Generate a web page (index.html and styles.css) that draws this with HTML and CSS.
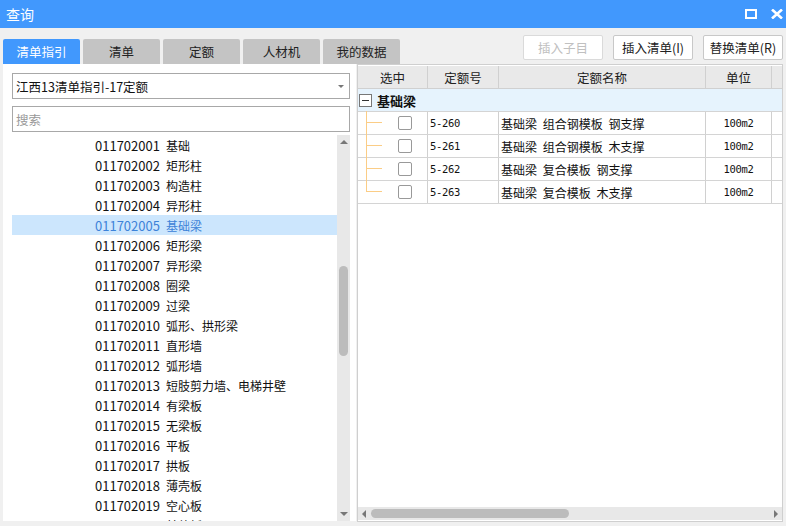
FILE: index.html
```html
<!DOCTYPE html>
<html lang="zh">
<head>
<meta charset="utf-8">
<link rel="stylesheet" href="styles.css">
</head>
<body>
<div class="win">
  <div class="titlebar">
    <span class="title">查询</span>
    <div class="wctrl">
      <svg width="12" height="10" viewBox="0 0 12 10"><rect x="1" y="1" width="10" height="8" fill="none" stroke="#fff" stroke-width="2"/></svg>
      <svg width="12" height="10" viewBox="0 0 12 10"><path d="M1 0.5 L11 9.5 M11 0.5 L1 9.5" stroke="#fff" stroke-width="2.6"/></svg>
    </div>
  </div>
  <div class="topbar">
    <div class="tabs">
      <div class="tab active">清单指引</div>
      <div class="tab">清单</div>
      <div class="tab">定额</div>
      <div class="tab">人材机</div>
      <div class="tab">我的数据</div>
    </div>
    <div class="btns">
      <div class="btn disabled">插入子目</div>
      <div class="btn">插入清单(I)</div>
      <div class="btn">替换清单(R)</div>
    </div>
  </div>
  <div class="main">
    <div class="pane-left">
      <div class="select">江西13清单指引-17定额<span class="caret"></span></div>
      <div class="search">搜索</div>
      <div class="listwrap">
        <div class="list">
          <div class="item"><span class="code">011702001</span><span>基础</span></div>
          <div class="item"><span class="code">011702002</span><span>矩形柱</span></div>
          <div class="item"><span class="code">011702003</span><span>构造柱</span></div>
          <div class="item"><span class="code">011702004</span><span>异形柱</span></div>
          <div class="item sel"><span class="code">011702005</span><span>基础梁</span></div>
          <div class="item"><span class="code">011702006</span><span>矩形梁</span></div>
          <div class="item"><span class="code">011702007</span><span>异形梁</span></div>
          <div class="item"><span class="code">011702008</span><span>圈梁</span></div>
          <div class="item"><span class="code">011702009</span><span>过梁</span></div>
          <div class="item"><span class="code">011702010</span><span>弧形、拱形梁</span></div>
          <div class="item"><span class="code">011702011</span><span>直形墙</span></div>
          <div class="item"><span class="code">011702012</span><span>弧形墙</span></div>
          <div class="item"><span class="code">011702013</span><span>短肢剪力墙、电梯井壁</span></div>
          <div class="item"><span class="code">011702014</span><span>有梁板</span></div>
          <div class="item"><span class="code">011702015</span><span>无梁板</span></div>
          <div class="item"><span class="code">011702016</span><span>平板</span></div>
          <div class="item"><span class="code">011702017</span><span>拱板</span></div>
          <div class="item"><span class="code">011702018</span><span>薄壳板</span></div>
          <div class="item"><span class="code">011702019</span><span>空心板</span></div>
          <div class="item"><span class="code">011702020</span><span>其他板</span></div>
        </div>
        <div class="vscroll">
          <span class="arr up"></span>
          <div class="vtrack"><div class="vthumb"></div></div>
          <span class="arr down"></span>
        </div>
      </div>
    </div>
    <div class="pane-right">
      <div class="grid">
        <div class="hrow">
          <div class="c c1">选中</div>
          <div class="c c2">定额号</div>
          <div class="c c3">定额名称</div>
          <div class="c c4">单位</div>
          <div class="c c5"></div>
        </div>
        <div class="group"><span class="minus"></span>基础梁</div>
        <div class="row">
          <div class="c c1"><span class="tree"></span><span class="chk"></span></div>
          <div class="c c2 mono">5-260</div>
          <div class="c c3">基础梁 组合钢模板 钢支撑</div>
          <div class="c c4 mono center">100m2</div>
          <div class="c c5"></div>
        </div>
        <div class="row">
          <div class="c c1"><span class="tree"></span><span class="chk"></span></div>
          <div class="c c2 mono">5-261</div>
          <div class="c c3">基础梁 组合钢模板 木支撑</div>
          <div class="c c4 mono center">100m2</div>
          <div class="c c5"></div>
        </div>
        <div class="row">
          <div class="c c1"><span class="tree"></span><span class="chk"></span></div>
          <div class="c c2 mono">5-262</div>
          <div class="c c3">基础梁 复合模板 钢支撑</div>
          <div class="c c4 mono center">100m2</div>
          <div class="c c5"></div>
        </div>
        <div class="row">
          <div class="c c1"><span class="tree end"></span><span class="chk"></span></div>
          <div class="c c2 mono">5-263</div>
          <div class="c c3">基础梁 复合模板 木支撑</div>
          <div class="c c4 mono center">100m2</div>
          <div class="c c5"></div>
        </div>
      </div>
      <div class="hscroll">
        <span class="harr harr-l"></span>
        <div class="hthumb"></div>
        <span class="harr harr-r"></span>
      </div>
    </div>
  </div>
</div>
</body>
</html>
```

FILE: styles.css
```css
* { box-sizing: border-box; }
html, body { margin: 0; padding: 0; }
body {
  width: 786px; height: 526px; overflow: hidden;
  background: #f0f0f0;
  font-family: "Noto Sans CJK SC", "Noto Sans", sans-serif;
  font-size: 12px; color: #222;
}
.win { display: flex; flex-direction: column; height: 526px; }
.titlebar {
  flex: 0 0 28px; background: #4198fd; color: #fff;
  display: flex; align-items: center; justify-content: space-between;
  padding: 0 3px 0 6px;
}
.title { font-size: 14px; line-height: 28px; }
.wctrl { display: flex; gap: 14px; align-items: center; }
.wctrl svg { display: block; }
.topbar {
  flex: 0 0 36px; display: flex; justify-content: space-between;
  padding: 0 3px 0 3px;
}
.tabs { display: flex; gap: 3px; align-items: flex-end; }
.tab {
  width: 77px; height: 25px; background: #c4c4c4; color: #222;
  border-radius: 2px 2px 0 0;
  display: flex; align-items: center; justify-content: center;
  font-size: 12.5px;
}
.tab.active { background: #4198fd; color: #fff; }
.btns { display: flex; gap: 10px; padding-top: 7px; }
.btn {
  width: 80px; height: 25px; background: #fff; border: 1px solid #c8c8c8;
  border-radius: 2px; display: flex; align-items: center; justify-content: center;
  font-size: 12.5px; color: #222;
}
.btn.disabled { color: #c0c0c0; border-color: #dadada; }
.main { flex: 1 1 0; min-height: 0; display: flex; padding: 0 3px 4px 3px; }
.pane-left {
  width: 353px; background: #fff; padding: 9px 6px 0 9px; margin-bottom: 1px;
  display: flex; flex-direction: column; min-height: 0;
}
.select, .search {
  flex: 0 0 26px; border: 1px solid #a8a8a8; background: #fff;
  display: flex; align-items: center; padding-left: 3px; position: relative;
}
.select { font-size: 12.5px; color: #111; }
.caret {
  position: absolute; right: 5px; top: 11px;
  border-left: 3px solid transparent; border-right: 3px solid transparent;
  border-top: 3px solid #777;
}
.search { margin-top: 7px; color: #999; font-size: 12.5px; }
.listwrap { flex: 1 1 0; min-height: 0; display: flex; margin-top: 3px; overflow: hidden; }
.list { flex: 1; overflow: hidden; }
.item {
  height: 20px; display: flex; align-items: center; padding-left: 83px;
  font-size: 12px; color: #111; white-space: nowrap;
}
.item .code { width: 71px; font-size: 13px; }
.item.sel { background: #cce6fd; color: #3d82d8; }
.vscroll {
  width: 13px; background: #e8e8e8; display: flex; flex-direction: column;
  align-items: center;
}
.arr { width: 0; height: 0; border-left: 4px solid transparent; border-right: 4px solid transparent; margin: 5px 0; }
.arr.up { border-bottom: 4px solid #777; }
.arr.down { border-top: 4px solid #777; }
.vtrack { flex: 1; width: 100%; padding: 117px 2px 0 2px; }
.vthumb { height: 90px; background: #bcbcbc; border-radius: 5px; }
.pane-right {
  flex: 1; margin-left: 1px; background: #fff; border: 1px solid #cfcfcf;
  display: flex; flex-direction: column; min-height: 0;
}
.grid { flex: 1; padding-top: 1px; }
.hrow, .row { display: flex; }
.hrow { height: 23px; background: #e9e9e9; border-bottom: 1px solid #d0d0d0; }
.c { border-right: 1px solid #d0d0d0; display: flex; align-items: center; }
.c1 { width: 70px; justify-content: center; position: relative; }
.c2 { width: 71px; }
.c3 { width: 207px; }
.c4 { width: 66px; }
.c5 { flex: 1; border-right: none; }
.hrow .c { justify-content: center; font-size: 12.5px; color: #222; }
.group {
  height: 23px; background: #e6f3fd; border-bottom: 1px solid #d4d4d4;
  display: flex; align-items: center; font-weight: bold; font-size: 13px; color: #111;
  padding-left: 1px;
}
.minus {
  width: 13px; height: 13px; border: 1px solid #777; background: #fff;
  margin-right: 5px; position: relative;
}
.minus::after {
  content: ""; position: absolute; left: 2px; right: 2px; top: 5px; height: 1px; background: #333;
}
.row { height: 23px; border-bottom: 1px solid #d4d4d4; }
.row .c1 { padding-left: 16px; }
.row .c2 { padding-left: 2px; }
.row .c3 { padding-left: 2px; font-size: 12px; color: #111; word-spacing: 3px; }
.mono { font-family: "DejaVu Sans Mono", "Liberation Mono", monospace; font-size: 10.5px; letter-spacing: -0.3px; color: #111; }
.center { justify-content: center; }
.tree {
  position: absolute; left: 8px; top: -1px; bottom: -1px; width: 16px;
  border-left: 1px solid #fbcd86;
}
.tree::after {
  content: ""; position: absolute; left: 0; right: 0; top: 11px; height: 1px; background: #fbcd86;
}
.tree.end { bottom: 11px; }
.chk {
  width: 14px; height: 14px; border: 1px solid #999; border-radius: 2px; background: #fff;
  margin-left: 8px;
}
.hscroll {
  flex: 0 0 13px; background: #e8e8e8; display: flex; align-items: center;
  padding: 0 4px; margin-bottom: 1px;
}
.harr { width: 0; height: 0; border-top: 4px solid transparent; border-bottom: 4px solid transparent; }
.harr-l { border-right: 4px solid #777; }
.harr-r { border-left: 4px solid #777; margin-left: auto; }
.hthumb { width: 198px; height: 9px; margin-left: 5px; background: #bcbcbc; border-radius: 5px; }
```
